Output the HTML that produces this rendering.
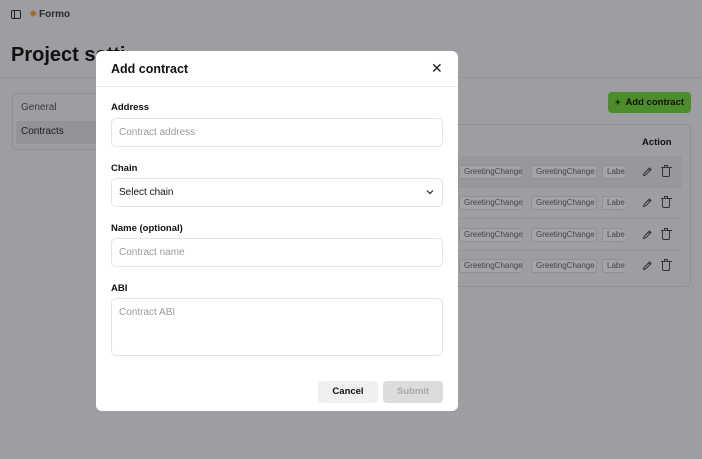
<!DOCTYPE html>
<html><head><style>
*{box-sizing:border-box;margin:0;padding:0}
body{width:702px;height:459px;overflow:hidden;background:#9d9ea1;font-family:"Liberation Sans",sans-serif;position:relative;color:#111}
.a{position:absolute}
.tag{position:absolute;height:14px;border:1px solid #8f9093;border-radius:3px;font-size:8px;color:#444;line-height:12px;padding:0 4px;background:#a3a4a7;white-space:nowrap;overflow:hidden}
.lbl{position:absolute;left:111px;font-size:9.5px;font-weight:bold;color:#111}
.inp{position:absolute;left:111px;width:332px;border:1px solid #e3e3e6;border-radius:5px;font-size:10px;color:#9a9a9e;padding-left:7px}
</style></head><body>
<div class="a" style="left:11px;top:10px;width:10px;height:9px;border:1.3px solid #222;border-radius:2px"></div>
<div class="a" style="left:14px;top:10px;width:1.3px;height:9px;background:#222"></div>
<div class="a" style="left:29px;top:9px;font-size:10px;color:#a66a2a">✸</div>
<div class="a" style="left:39px;top:9px;font-size:10px;font-weight:bold;color:#2a2a2a">Formo</div>
<div class="a" style="left:11px;top:44px;font-size:20px;font-weight:bold;color:#111">Project setti</div>
<div class="a" style="left:0;top:77px;width:702px;height:1px;background:#939497"></div>
<div class="a" style="left:12px;top:93px;width:90px;height:57px;border:1px solid #8f9093;border-radius:5px"></div>
<div class="a" style="left:16px;top:121px;width:84px;height:23px;background:#929396;border-radius:3px"></div>
<div class="a" style="left:21px;top:102px;font-size:10px;color:#3a3a3c">General</div>
<div class="a" style="left:21px;top:126px;font-size:10px;color:#1a1a1a">Contracts</div>
<div class="a" style="left:608px;top:92px;width:83px;height:21px;background:#4c8c2a;border-radius:4px;font-size:9.5px;font-weight:bold;color:#111;line-height:21px;text-align:center">+&nbsp; Add contract</div>
<div class="a" style="left:440px;top:124px;width:251px;height:163px;border:1px solid #8f9093;border-radius:6px"></div>
<div class="a" style="left:642px;top:137px;font-size:9.5px;font-weight:bold">Action</div>
<div class="a" style="left:440px;top:156px;width:242px;height:31px;background:#97989b"></div>
<div class="a" style="left:440px;top:218px;width:242px;height:1px;background:#939497"></div>
<div class="a" style="left:440px;top:250px;width:242px;height:1px;background:#939497"></div>
<div class="a" style="left:440px;top:187px;width:242px;height:1px;background:#939497"></div>
<div id="rows"></div>
<script>
var h='';[165,196,228,259].forEach(function(y){h+='<div class="tag" style="left:459px;top:'+y+'px;width:64px">GreetingChange</div><div class="tag" style="left:531px;top:'+y+'px;width:66px">GreetingChange</div><div class="tag" style="left:602px;top:'+y+'px;width:23px;border-right:none">Labe</div><svg class="a" style="left:642px;top:'+(y+1)+'px" width="11" height="11" viewBox="0 0 11 11"><path d="M1.5 9.5L2 7.5L7.5 2L9 3.5L3.5 9Z M6.5 3L8 4.5" fill="none" stroke="#333" stroke-width="1"/></svg><div class="a" style="left:662px;top:'+(y+3)+'px;width:8px;height:9px;border:1.1px solid #333;border-top:none;border-radius:0 0 2px 2px"></div><div class="a" style="left:660.5px;top:'+(y+2)+'px;width:11px;height:1.1px;background:#333"></div><div class="a" style="left:664px;top:'+(y)+'px;width:4px;height:2px;border:1px solid #333;border-bottom:none"></div>';});
document.getElementById('rows').innerHTML=h;
</script>
<div class="a" style="left:96px;top:51px;width:362px;height:360px;background:#fff;border-radius:6px"></div>
<div class="a" style="left:111px;top:62px;font-size:12.5px;font-weight:bold">Add contract</div>
<div class="a" style="left:431px;top:60px;font-size:14px;color:#222">✕</div>
<div class="a" style="left:96px;top:86px;width:362px;height:1px;background:#ececee"></div>
<div class="lbl" style="top:102px">Address</div>
<div class="inp" style="top:118px;height:29px;line-height:27px">Contract address</div>
<div class="lbl" style="top:163px">Chain</div>
<div class="inp" style="top:178px;height:29px;line-height:27px;color:#111">Select chain</div>
<svg class="a" style="left:426px;top:188px" width="8" height="8" viewBox="0 0 8 8"><path d="M1 2.5L4 5.5L7 2.5" fill="none" stroke="#222" stroke-width="1.2"/></svg>
<div class="lbl" style="top:223px">Name (optional)</div>
<div class="inp" style="top:238px;height:29px;line-height:27px">Contract name</div>
<div class="lbl" style="top:283px">ABI</div>
<div class="inp" style="top:298px;height:58px;padding-top:8px">Contract ABI</div>
<div class="a" style="left:318px;top:381px;width:60px;height:22px;background:#efeff1;border-radius:4px;font-size:9.5px;font-weight:bold;line-height:22px;text-align:center">Cancel</div>
<div class="a" style="left:383px;top:381px;width:60px;height:22px;background:#dcdcde;border-radius:4px;font-size:9.5px;font-weight:bold;color:#a8a8ab;line-height:22px;text-align:center">Submit</div>
</body></html>
